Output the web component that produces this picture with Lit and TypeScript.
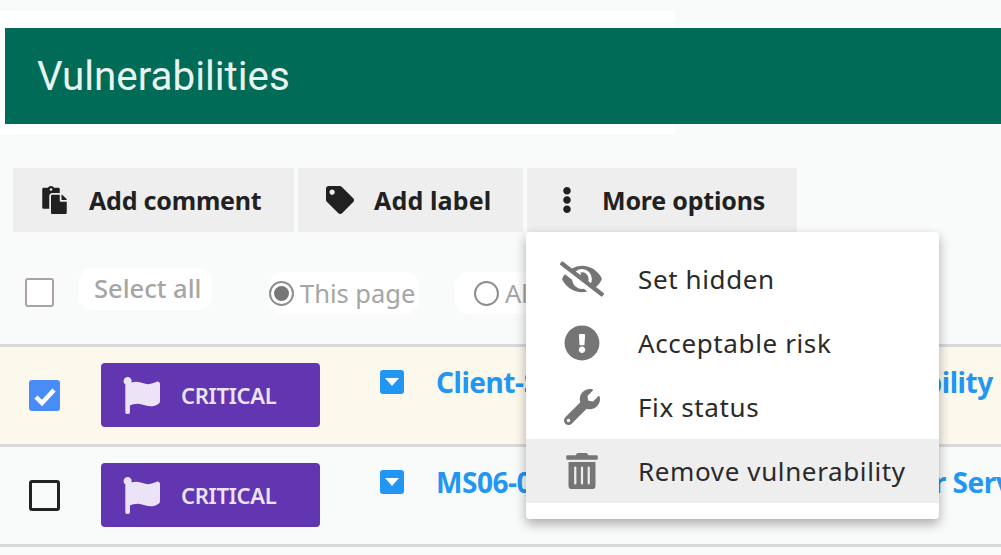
import { LitElement, html, css, svg } from "lit";
import { customElement } from "lit/decorators.js";

const ic = (vb: string, d: string, cls: string) =>
  html`<svg class=${cls} viewBox=${vb} fill="currentColor" aria-hidden="true">${svg`<path d=${d}></path>`}</svg>`;

const PASTE = "M128 184c0-30.879 25.122-56 56-56h136V56c0-13.255-10.745-24-24-24h-80.61C204.306 12.89 183.637 0 160 0s-44.306 12.89-55.39 32H24C10.745 32 0 42.745 0 56v336c0 13.255 10.745 24 24 24h104V184zm32-144c13.255 0 24 10.745 24 24s-10.745 24-24 24-24-10.745-24-24 10.745-24 24-24zm184 248h104v200c0 13.255-10.745 24-24 24H184c-13.255 0-24-10.745-24-24V184c0-13.255 10.745-24 24-24h136v104c0 13.2 10.8 24 24 24zm104-38.059V256h-96v-96h6.059a24 24 0 0 1 16.97 7.029l65.941 65.941a24.002 24.002 0 0 1 7.03 16.971z";
const TAG = "M0 252.118V48C0 21.49 21.49 0 48 0h204.118a48 48 0 0 1 33.941 14.059l211.882 211.882c18.745 18.745 18.745 49.137 0 67.882L293.823 497.941c-18.745 18.745-49.137 18.745-67.882 0L14.059 286.059A48 48 0 0 1 0 252.118zM112 64c-26.51 0-48 21.49-48 48s21.49 48 48 48 48-21.49 48-48-21.49-48-48-48z";
const DOTS = "M96 184c39.8 0 72 32.2 72 72s-32.2 72-72 72-72-32.2-72-72 32.2-72 72-72zM24 80c0 39.8 32.2 72 72 72s72-32.2 72-72S135.8 8 96 8 24 40.2 24 80zm0 352c0 39.8 32.2 72 72 72s72-32.2 72-72-32.2-72-72-72-72 32.2-72 72z";
const EYE = "M320 400c-75.85 0-137.25-58.71-142.9-133.11L72.2 185.82c-13.79 17.3-26.48 35.59-36.72 55.59a32.35 32.35 0 0 0 0 29.19C89.71 376.41 197.07 448 320 448c26.91 0 52.87-4 77.89-10.46L346 397.39a144.13 144.13 0 0 1-26 2.61zm313.82 58.1l-110.55-85.44a331.25 331.25 0 0 0 81.25-102.07 32.35 32.35 0 0 0 0-29.19C550.29 135.59 442.93 64 320 64a308.15 308.15 0 0 0-147.32 37.7L45.46 3.37A16 16 0 0 0 23 6.18L3.37 31.45A16 16 0 0 0 6.18 53.9l588.36 454.73a16 16 0 0 0 22.46-2.81l19.64-25.27a16 16 0 0 0-2.82-22.45zm-183.72-142l-39.3-30.38A94.75 94.75 0 0 0 416 256a94.76 94.76 0 0 0-121.31-92.21A47.65 47.65 0 0 1 304 192a46.64 46.64 0 0 1-1.54 10l-73.61-56.89A142.31 142.31 0 0 1 320 112a143.92 143.92 0 0 1 144 144c0 21.63-5.29 41.79-13.9 60.11z";
const RISK = "M504 256c0 136.997-111.043 248-248 248S8 392.997 8 256C8 119.083 119.043 8 256 8s248 111.083 248 248zm-248 50c-25.405 0-46 20.595-46 46s20.595 46 46 46 46-20.595 46-46-20.595-46-46-46zm-43.673-165.346l7.418 136c.347 6.364 5.609 11.346 11.982 11.346h48.546c6.373 0 11.635-4.982 11.982-11.346l7.418-136c.375-6.874-5.098-12.654-11.982-12.654h-63.383c-6.884 0-12.356 5.78-11.981 12.654z";
const WRENCH = "M507.73 109.1c-2.24-9.03-13.54-12.09-20.12-5.51l-74.36 74.36-67.88-11.31-11.31-67.88 74.36-74.36c6.62-6.62 3.43-17.9-5.66-20.16-47.38-11.74-99.55.91-136.58 37.93-39.64 39.64-50.55 97.1-34.05 147.2L18.74 402.76c-24.99 24.99-24.99 65.51 0 90.5 24.99 24.99 65.51 24.99 90.5 0l213.21-213.21c50.12 16.71 107.47 5.68 147.37-34.22 37.07-37.07 49.7-89.32 37.91-136.73zM64 472c-13.25 0-24-10.75-24-24 0-13.26 10.75-24 24-24s24 10.74 24 24c0 13.25-10.75 24-24 24z";
const TRASH = "M32 464a48 48 0 0 0 48 48h288a48 48 0 0 0 48-48V128H32zm272-256a16 16 0 0 1 32 0v224a16 16 0 0 1-32 0zm-96 0a16 16 0 0 1 32 0v224a16 16 0 0 1-32 0zm-96 0a16 16 0 0 1 32 0v224a16 16 0 0 1-32 0zM432 32H312l-9.4-18.7A24 24 0 0 0 281.1 0H166.8a23.72 23.72 0 0 0-21.4 13.3L136 32H16A16 16 0 0 0 0 48v32a16 16 0 0 0 16 16h416a16 16 0 0 0 16-16V48a16 16 0 0 0-16-16z";
const FLAG = "M349.565 98.783C295.978 98.783 251.721 64 184.348 64c-24.955 0-47.309 4.384-68.045 12.013a55.947 55.947 0 0 0 3.586-23.562C118.117 24.015 94.806 1.206 66.338.048 34.345-1.254 8 24.296 8 56c0 19.026 9.497 35.825 24 45.945V488c0 13.255 10.745 24 24 24h16c13.255 0 24-10.745 24-24v-94.4c28.311-12.064 63.582-22.122 114.435-22.122 53.588 0 97.844 34.783 165.217 34.783 48.169 0 86.667-16.294 122.505-40.858C506.84 359.452 512 349.571 512 339.045v-243.1c0-23.393-24.269-38.87-45.485-29.016-34.338 15.948-76.454 31.854-116.95 31.854z";

@customElement("app-root")
export class AppRoot extends LitElement {
  static styles = css`
    :host { display: block; height: 555px; overflow: hidden; background: #f9fafa; font-family: "Noto Sans", sans-serif; color: #212121; position: relative; }
    .band { width: 675px; height: 123px; margin-top: 0; padding: 17px 0 0; box-sizing: border-box; background: #fff; position: relative; top: 11px; }
    .title { width: 996px; height: 96px; margin-left: 5px; background: #006b57; color: #e8f4f0; font: 400 40.3px/98px Roboto, sans-serif; padding-left: 32px; box-sizing: border-box; }
    .toolbar { display: flex; gap: 4px; margin: 45px 0 0 13px; position: relative; }
    .btn { height: 64px; box-sizing: border-box; background: #eeeeee; display: flex; align-items: center; font-weight: 700; font-size: 25px; letter-spacing: -0.2px; color: #212121; }
    .b1 { width: 281px; padding-left: 29px; }
    .b2 { width: 225px; padding-left: 28px; letter-spacing: .15px; }
    .b3 { width: 270px; padding-left: 35px; }
    .b1 svg { width: 25px; height: 28px; margin-right: 22px; }
    .b2 svg { width: 28px; height: 28px; margin-right: 20px; }
    .b3 svg { width: 10px; height: 28px; margin-right: 30px; }
    .menu { position: absolute; left: 513px; top: 64px; width: 413px; height: 287px; background: #fff; border-radius: 4px; box-shadow: 0 5px 12px rgba(0,0,0,.32); padding-top: 15px; box-sizing: border-box; z-index: 2; }
    .item { height: 64px; display: flex; align-items: center; font-size: 26px; letter-spacing: 0.62px; color: #2a2a2a; }
    .item.hover { background: #eeeeee; }
    .slot { width: 112px; flex: none; display: flex; justify-content: center; box-sizing: border-box; color: #757575; }
    .item svg { height: 36px; width: 44px; }
    .select { height: 112px; display: flex; box-sizing: border-box; color: #a5a5a5; font-size: 25.5px; white-space: nowrap; }
    .cb0 { width: 25px; height: 25px; border: 2.5px solid #a9a4a4; border-radius: 3px; background: #fff; margin: 46px 0 0 25px; flex: none; }
    .lbl { background: #fff; border-radius: 14px; height: 42px; line-height: 42px; flex: none; box-sizing: border-box; }
    .l1 { margin: 36px 0 0 25px; padding: 0 12px 0 15px; font-weight: 500; width: 133px; line-height: 40px; }
    .l2 { margin: 40px 0 0 57px; display: flex; align-items: center; gap: 6px; width: 150px; }
    .l3 { margin: 40px 0 0 36px; display: flex; align-items: center; gap: 6px; padding-left: 19px; width: 80px; }
    .radio { width: 21px; height: 21px; border: 2px solid #8d8d8d; border-radius: 50%; flex: none; background: #fff; position: relative; }
    .radio.on::after { content: ""; position: absolute; inset: 3px; border-radius: 50%; background: #777; }
    .row { height: 97px; border-top: 3px solid #d9d9d9; display: flex; background: #f9fafa; overflow: hidden; }
    .row.sel { background: #fdf8ec; }
    .row.end { height: 0; }
    .chk { width: 31px; height: 31px; border-radius: 3px; margin: 33px 0 0 29px; box-sizing: border-box; flex: none; display: flex; align-items: center; justify-content: center; }
    .chk.on { background: #4a8cf7; }
    .chk.off { border: 3px solid #222; }
    .chk svg { width: 24px; height: 24px; }
    .badge { width: 219px; height: 64px; margin: 16px 0 0 41px; background: #6236b0; border-radius: 4px; color: #eae4f6; display: flex; align-items: center; font-weight: 600; font-size: 22px; letter-spacing: -.3px; flex: none; box-sizing: border-box; padding-left: 22px; }
    .badge svg { width: 37px; height: 37px; margin-right: 21px; }
    .caret { width: 24px; height: 24px; border-radius: 3px; background: #2196f3; flex: none; margin: 23px 0 0 60px; position: relative; }
    .caret::after { content: ""; position: absolute; left: 5px; top: 8px; border: 7px solid transparent; border-top: 8px solid #fff; border-bottom: 0; }
    .name { margin: 15px 0 0 32px; color: #2196f3; font-weight: 700; font-size: 28px; line-height: 40px; letter-spacing: -.47px; white-space: nowrap; }
  `;

  row(sel: boolean, name: string) {
    return html`<div class="row ${sel ? "sel" : ""}">
      <div class="chk ${sel ? "on" : "off"}">
        ${sel ? html`<svg viewBox="0 0 24 24" fill="none" stroke="#fff" stroke-width="4.5"><path d="M3 13l6 6 12-13"></path></svg>` : ""}
      </div>
      <div class="badge">${ic("0 0 512 512", FLAG, "")}CRITICAL</div>
      <div class="caret"></div>
      <div class="name">${name}</div>
    </div>`;
  }

  render() {
    return html`
      <div class="band"><div class="title">Vulnerabilities</div></div>
      <div class="toolbar">
        <div class="btn b1">${ic("0 0 448 512", PASTE, "")}Add comment</div>
        <div class="btn b2">${ic("0 0 512 512", TAG, "")}Add label</div>
        <div class="btn b3">${ic("0 0 192 512", DOTS, "")}More options</div>
        <div class="menu">
          <div class="item"><span class="slot">${ic("0 0 640 512", EYE, "")}</span>Set hidden</div>
          <div class="item"><span class="slot">${ic("0 0 512 512", RISK, "")}</span>Acceptable risk</div>
          <div class="item"><span class="slot">${ic("0 0 512 512", WRENCH, "")}</span>Fix status</div>
          <div class="item hover"><span class="slot">${ic("0 0 448 512", TRASH, "")}</span>Remove vulnerability</div>
        </div>
      </div>
      <div class="select">
        <div class="cb0"></div>
        <div class="lbl l1">Select all</div>
        <div class="lbl l2"><span class="radio on"></span>This page</div>
        <div class="lbl l3"><span class="radio"></span>All</div>
      </div>
      ${this.row(true, "Client-Side Remote Memory Vulnerability")}
      ${this.row(false, "MS06-040: Vulnerability in your Server Service")}
      <div class="row end"></div>
    `;
  }
}
